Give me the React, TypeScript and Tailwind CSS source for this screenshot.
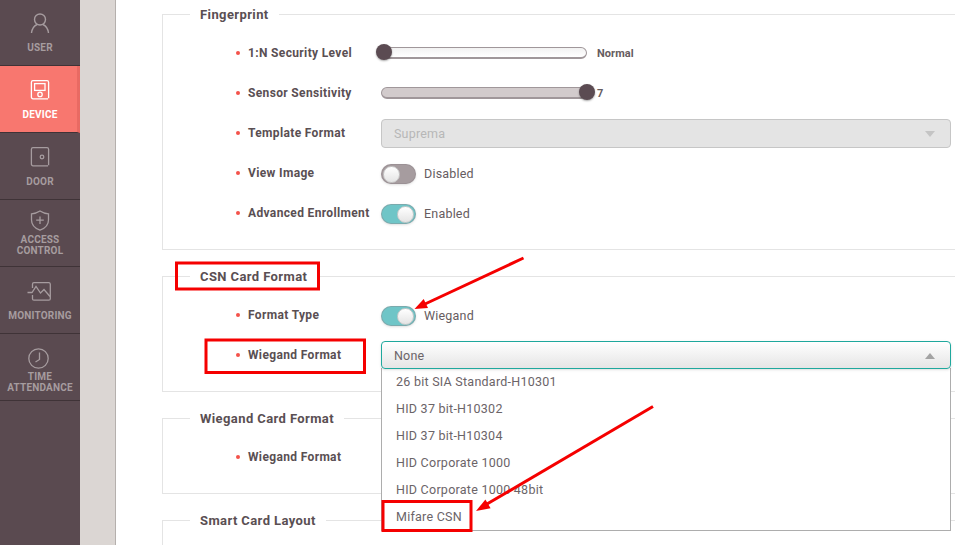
import type { ReactNode } from 'react'

const NAV_STROKE = '#a69c9f'

function UserIcon() {
  return (
    <svg width="20" height="21" viewBox="0 0 20 21" fill="none" stroke={NAV_STROKE} strokeWidth="1.4">
      <circle cx="10" cy="6.5" r="5.5" />
      <path d="M1.5 20c.5-4.5 3.5-7.5 5.5-8.5M18.5 20c-.5-4.5-3.5-7.5-5.5-8.5" />
    </svg>
  )
}

function DeviceIcon() {
  return (
    <svg width="20" height="20" viewBox="0 0 20 20" fill="none" stroke="#fff" strokeWidth="1.3">
      <path d="M18 18.8H3a1.6 1.6 0 0 1-1.6-1.6V2.2A1.6 1.6 0 0 1 3 .7h14a1.6 1.6 0 0 1 1.6 1.5v16" />
      <rect x="4.6" y="3.6" width="10.4" height="6.8" />
      <circle cx="10" cy="14.4" r="2.2" />
    </svg>
  )
}

function DoorIcon() {
  return (
    <svg width="20" height="20" viewBox="0 0 20 20" fill="none" stroke={NAV_STROKE} strokeWidth="1.3">
      <path d="M18 18.8H3a1.6 1.6 0 0 1-1.6-1.6V2.2A1.6 1.6 0 0 1 3 .7h14a1.6 1.6 0 0 1 1.6 1.5v16" />
      <circle cx="12" cy="10" r="1.8" />
    </svg>
  )
}

function ShieldIcon() {
  return (
    <svg width="20" height="21" viewBox="0 0 20 21" fill="none" stroke={NAV_STROKE} strokeWidth="1.3">
      <path d="M10 1c2.5 1.700 5.500 2.600 8.500 2.800V10c0 4.800-3.400 8.300-8.500 10.200C4.900 18.300 1.500 14.800 1.500 10V3.800C4.500 3.600 7.500 2.700 10 1z" />
      <path d="M10 6.500v7.500M6.200 10.200h7.600" />
    </svg>
  )
}

function MonitorIcon() {
  return (
    <svg className="mr-[3px]" width="24" height="19" viewBox="0 0 24 19" fill="none" stroke={NAV_STROKE} strokeWidth="1.3">
      <path d="M5.500 6V2.200A1.500 1.500 0 0 1 7 .7h15a1.500 1.500 0 0 1 1.300 1.500v14.500a1.500 1.500 0 0 1-1.500 1.500H7a1.500 1.500 0 0 1-1.500-1.500V13" />
      <path d="M.5 10.500h4.500L9 4.500l4.500 6.500 3.500-3.500 6 7" />
    </svg>
  )
}

function ClockIcon() {
  return (
    <svg className="mr-[3px]" width="21" height="21" viewBox="0 0 21 21" fill="none" stroke={NAV_STROKE} strokeWidth="1.3">
      <circle cx="10.500" cy="10.500" r="9.700" />
      <path d="M11.500 4.500v7l-4 2.500" />
    </svg>
  )
}

function NavItem({ icon, lines, active, first, spacing }: { icon: ReactNode; lines: string[]; active?: boolean; first?: boolean; spacing: string }) {
  return (
    <div
      className={`flex flex-col items-center justify-center border-b border-[#3f3337] ${spacing} ${first ? 'h-[66px]' : 'h-[67px]'} ${
        active ? 'border-r-[3px] border-r-[#e96a63] bg-[#f8776f] pl-[3px] text-white' : 'text-[#a69c9f]'
      }`}
    >
      {icon}
      <div className="text-center text-[10px] leading-[11px] font-bold tracking-[0.2px]">
        {lines.map((l) => (
          <div key={l}>{l}</div>
        ))}
      </div>
    </div>
  )
}

function Row({ label, children }: { label: string; children: ReactNode }) {
  return (
    <div className="flex h-10 items-center">
      <div className="flex w-[218px] items-center pl-[73px] text-[12px] font-bold tracking-[0.35px] text-[#5a4f53]">
        <span className="mr-2 h-1 w-1 rounded-full bg-[#f4524a]" />
        {label}
      </div>
      {children}
    </div>
  )
}

function Toggle({ on, label }: { on: boolean; label: string }) {
  return (
    <div className="flex items-center pt-[2px]">
      <div className={`flex h-5 w-[35px] items-center rounded-full border border-[#8d8286]/40 p-px shadow-sm ${on ? 'justify-end bg-[#6fc5c7]' : 'justify-start bg-[#a69c9f]'}`}>
        <span className="h-[17px] w-[17px] rounded-full border border-[#c9c9c9] bg-gradient-to-b from-white to-[#e4e4e4]" />
      </div>
      <span className="ml-2 pt-[1px] text-[12.500px] tracking-[0.2px] text-[#665c60]">{label}</span>
    </div>
  )
}

function Slider({ filled, value }: { filled: boolean; value: string }) {
  return (
    <div className="flex items-center">
      <div className={`relative h-3 w-[206px] rounded-full border border-b-2 border-[#a0979a] ${filled ? 'bg-[#d2cbcc]' : 'bg-gradient-to-b from-[#f2f2f2] to-white'}`}>
        <span className={`absolute top-[-4px] h-4 w-4 rounded-full bg-[#5b4b52] shadow-[0_1px_2px_rgba(0,0,0,0.35)] ${filled ? 'right-[-9px]' : 'left-[-6px]'}`} />
      </div>
      <span className="ml-[10px] pt-[2px] text-[11px] font-bold tracking-[0.05px] text-[#665c60]">{value}</span>
    </div>
  )
}

function Section({ title, children }: { title: string; children?: ReactNode }) {
  return (
    <fieldset className="mb-4 w-[830px] border border-[#e4e4e4] pt-[9px] pb-4">
      <legend className="ml-[27px] h-5 px-[10px] pt-[1px] text-[13px] leading-5 font-bold tracking-[0.4px] text-[#5a4f53]">{title}</legend>
      {children}
    </fieldset>
  )
}

const WIEGAND_OPTIONS = [
  '26 bit SIA Standard-H10301',
  'HID 37 bit-H10302',
  'HID 37 bit-H10304',
  'HID Corporate 1000',
  'HID Corporate 1000 48bit',
  'Mifare CSN',
]

export default function App() {
  return (
    <div className="relative flex h-[545px] w-[955px] overflow-hidden bg-white font-['Roboto',sans-serif]">
      <aside className="w-20 shrink-0 bg-[#5a4a50]">
        <NavItem first spacing="gap-2" icon={<UserIcon />} lines={['USER']} />
        <NavItem active spacing="gap-[9px] pt-[1px]" icon={<DeviceIcon />} lines={['DEVICE']} />
        <NavItem spacing="gap-[9px] pt-[1px]" icon={<DoorIcon />} lines={['DOOR']} />
        <NavItem spacing="gap-[3px]" icon={<ShieldIcon />} lines={['ACCESS', 'CONTROL']} />
        <NavItem spacing="gap-[9px] pt-[3px]" icon={<MonitorIcon />} lines={['MONITORING']} />
        <NavItem spacing="gap-[2px] pt-[6px]" icon={<ClockIcon />} lines={['TIME', 'ATTENDANCE']} />
      </aside>
      <div className="w-9 shrink-0 border-r border-[#b5b0ad] bg-[#dbd6d3]" />
      <main className="min-w-0 flex-1 pt-1 pl-[46px]">
        <Section title="Fingerprint">
          <Row label="1:N Security Level">
            <Slider filled={false} value="Normal" />
          </Row>
          <Row label="Sensor Sensitivity">
            <Slider filled value="7" />
          </Row>
          <Row label="Template Format">
            <div className="flex h-[29px] w-[570px] items-center justify-between rounded border border-[#c6c6c6] bg-[#e4e4e4] pt-[2px] pr-[15px] pl-3 text-[12.500px] tracking-[0.2px] text-[#b7b7b7]">
              Suprema
              <span className="h-0 w-0 border-x-[5px] border-t-[6px] border-x-transparent border-t-[#c4c4c4]" />
            </div>
          </Row>
          <Row label="View Image">
            <Toggle on={false} label="Disabled" />
          </Row>
          <Row label="Advanced Enrollment">
            <Toggle on label="Enabled" />
          </Row>
        </Section>
        <Section title="CSN Card Format">
          <Row label="Format Type">
            <Toggle on label="Wiegand" />
          </Row>
          <Row label="Wiegand Format">
            <div className="relative h-[28px] w-[570px]">
              <div className="relative z-20 flex h-[28px] items-center justify-between rounded border border-[#1fa89d] bg-gradient-to-b from-white to-[#e5e5e5] pt-[2px] pr-[15px] pl-3 text-[12.500px] tracking-[0.2px] text-[#6b6468] shadow-sm">
                None
                <span className="h-0 w-0 border-x-[5px] border-b-[6px] border-x-transparent border-b-[#a3a3a3]" />
              </div>
              <ul className="absolute top-[27px] left-0 z-10 w-[570px] border-x border-b border-[#adadad] bg-white">
                {WIEGAND_OPTIONS.map((o) => (
                  <li key={o} className="flex h-[27px] items-center pt-[2px] pl-[14px] text-[12.500px] tracking-[0.25px] text-[#6b6468]">
                    {o}
                  </li>
                ))}
              </ul>
            </div>
          </Row>
        </Section>
        <Section title="Wiegand Card Format">
          <Row label="Wiegand Format">
            <div className="h-[28px] w-[570px] rounded border border-[#e4e4e4] bg-[#f6f6f6]" />
          </Row>
        </Section>
        <Section title="Smart Card Layout" />
      </main>
      <svg className="pointer-events-none absolute inset-0 z-30" width="955" height="545" fill="none">
        <rect x="176.500" y="263" width="142" height="26" stroke="#f50000" strokeWidth="3" />
        <rect x="206" y="340" width="158.500" height="32.500" stroke="#f50000" strokeWidth="3" />
        <rect x="383" y="501.500" width="88" height="29" stroke="#f50000" strokeWidth="3" />
        <path d="M523.500 258L425 304" stroke="#f50000" strokeWidth="3" />
        <polygon points="414.500,309 423.700,299 428,308" fill="#f50000" />
        <path d="M653 406.500L487 504" stroke="#f50000" strokeWidth="3" />
        <polygon points="476,511 485.400,499.600 490.600,508.200" fill="#f50000" />
      </svg>
    </div>
  )
}
